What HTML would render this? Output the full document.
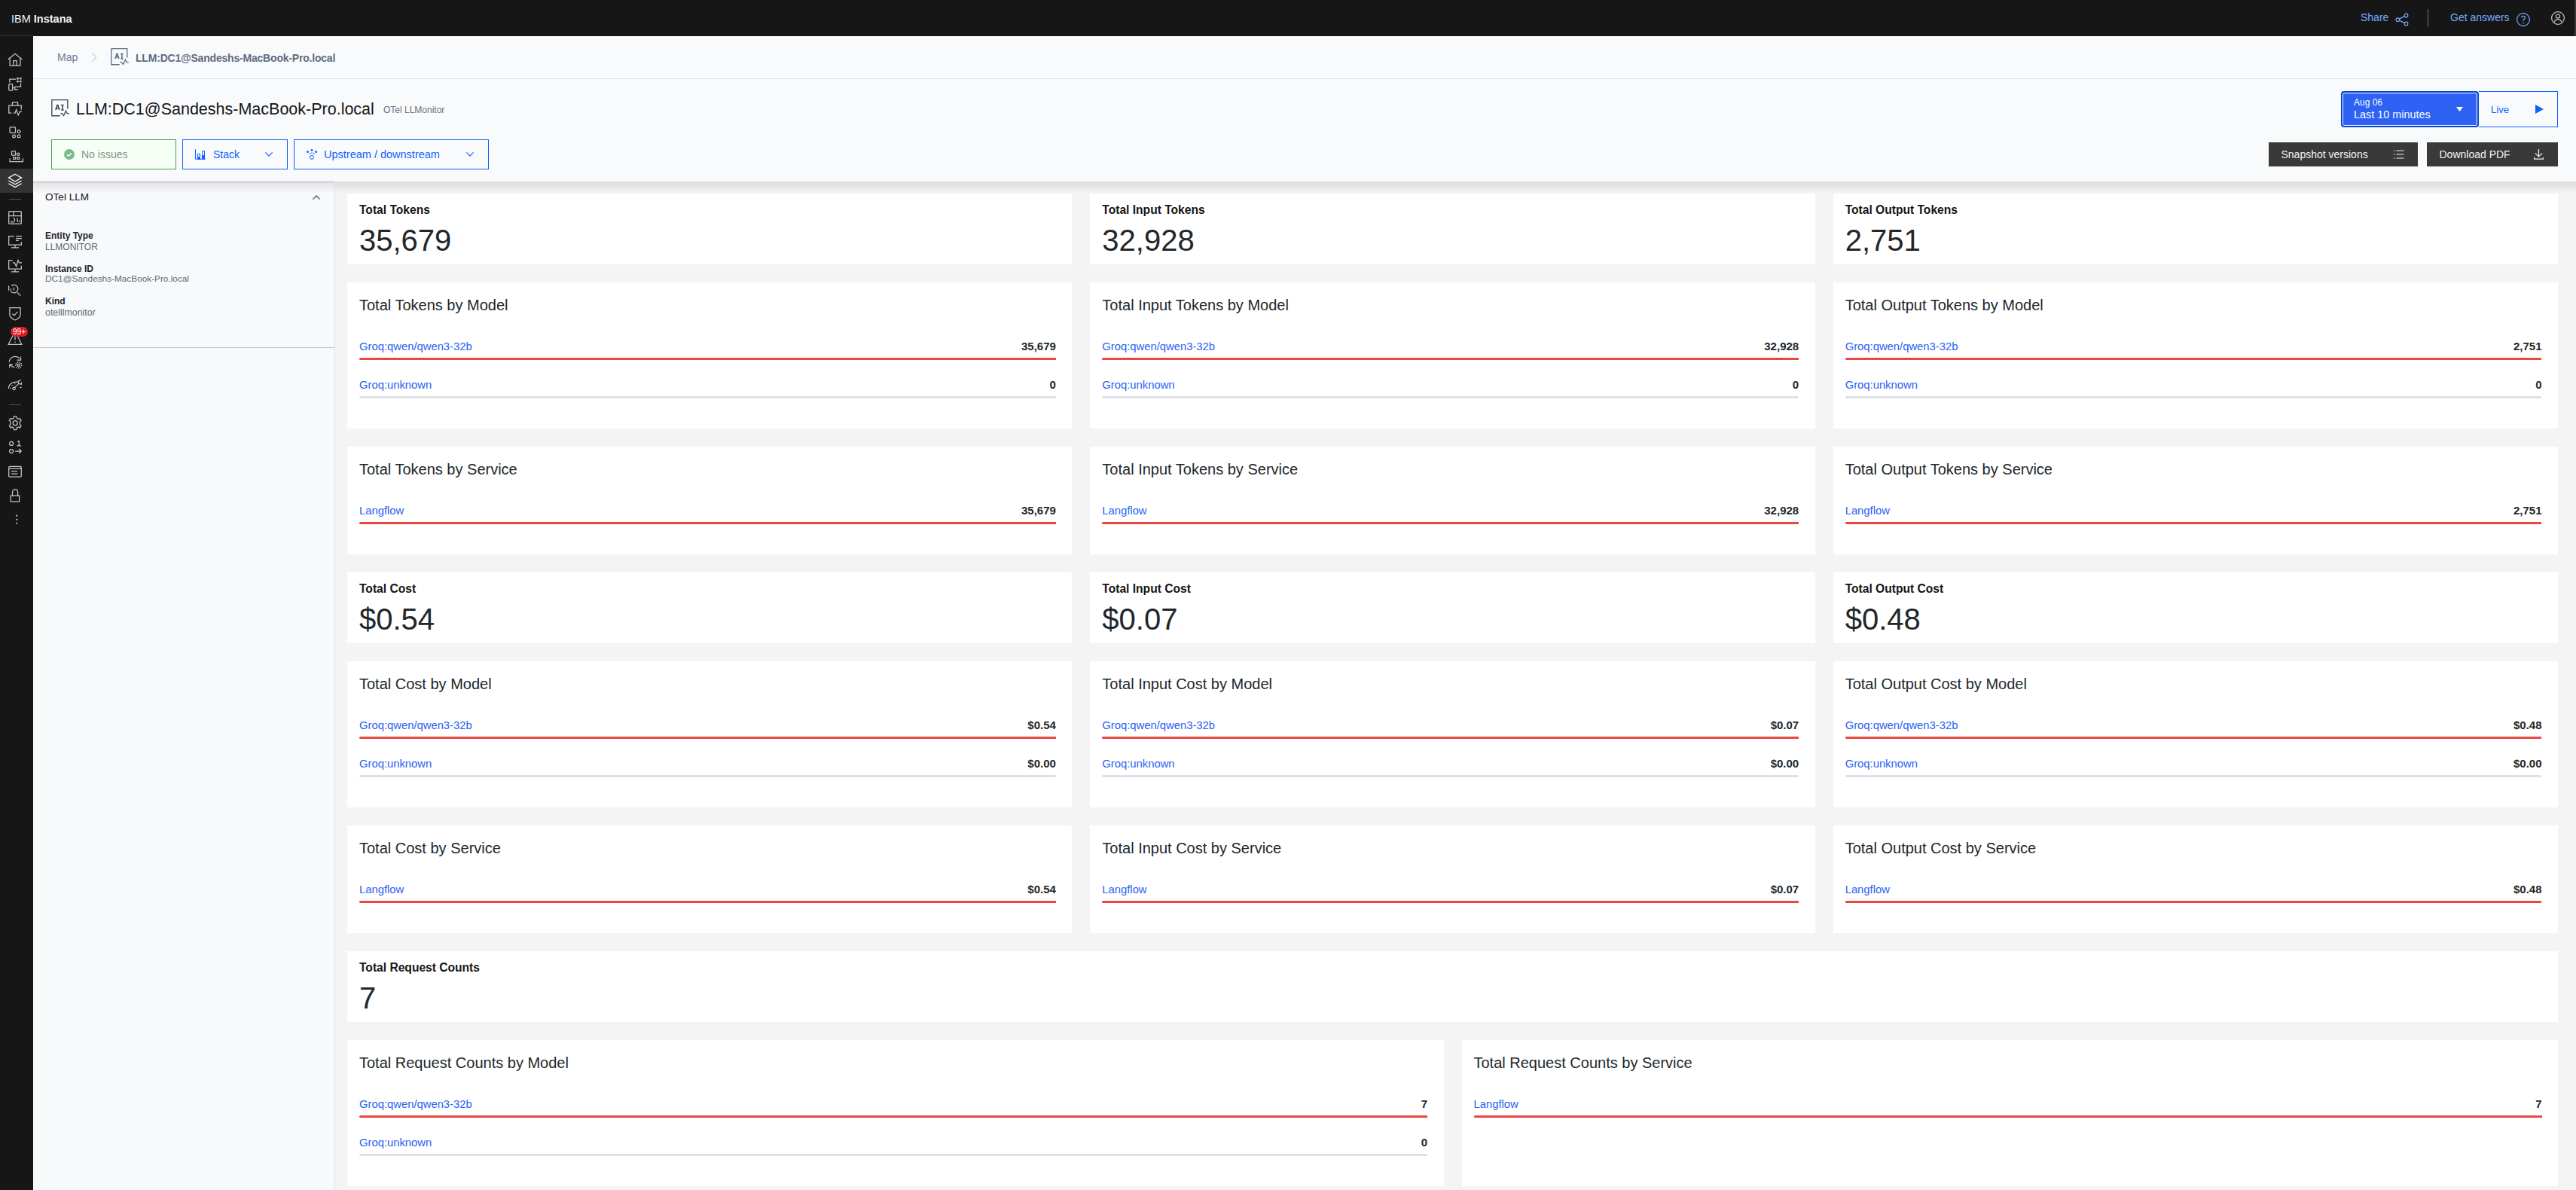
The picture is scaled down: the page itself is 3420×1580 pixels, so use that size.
<!DOCTYPE html>
<html><head><meta charset="utf-8"><title>IBM Instana</title>
<style>
*{box-sizing:border-box;margin:0;padding:0}
html,body{width:3420px;height:1580px;overflow:hidden;background:#f4f4f4;font-family:"Liberation Sans", sans-serif}
.t{position:absolute;white-space:nowrap}
.r{position:absolute}
.ic{position:absolute;fill:none;stroke:currentColor;stroke-width:1.25;stroke-linecap:butt;stroke-linejoin:miter;overflow:visible}
svg.s{position:absolute;overflow:visible;fill:none;stroke:currentColor}
</style></head><body>
<!-- top header -->
<div class="r" style="left:0px;top:0px;width:3420px;height:48px;background:#161616"></div>
<div class="t" style="left:15px;top:17.6px;font-size:14.5px;line-height:14.5px;color:#f4f4f4">IBM <b>Instana</b></div>
<div class="t" style="left:3134px;top:16.15px;font-size:14px;line-height:14px;color:#78a9ff;font-weight:400;">Share</div>
<svg class="s" style="left:3180px;top:17px;color:#78a9ff;stroke-width:1.2" width="18" height="18" viewBox="0 0 18 18"><circle cx="14.5" cy="3.5" r="2.3"/><circle cx="3.3" cy="9.2" r="2.3"/><circle cx="14.5" cy="14.5" r="2.3"/><path d="M5.4 8.1 L12.4 4.6 M5.4 10.3 L12.4 13.4"/></svg>
<div class="r" style="left:3223px;top:12px;width:1px;height:24px;background:#6f6f6f"></div>
<div class="t" style="left:3253px;top:16.15px;font-size:14px;line-height:14px;color:#78a9ff;font-weight:400;">Get answers</div>
<svg class="s" style="left:3341px;top:17px;color:#78a9ff;stroke-width:1.2" width="18" height="18" viewBox="0 0 18 18"><circle cx="9" cy="9" r="8.4"/><path d="M6.6 6.6 C6.6 5.2 7.6 4.4 9 4.4 C10.4 4.4 11.4 5.2 11.4 6.5 C11.4 8.2 9 8.4 9 10.2 V11"/><circle cx="9" cy="13.4" r="0.8" fill="currentColor" stroke="none"/></svg>
<svg class="s" style="left:3387px;top:15px;color:#c6c6c6;stroke-width:1.2" width="18" height="18" viewBox="0 0 18 18"><circle cx="9" cy="9" r="8.4"/><circle cx="9" cy="6.6" r="2.6"/><path d="M4.4 14.6 C4.4 12 6 10.8 9 10.8 C12 10.8 13.6 12 13.6 14.6"/></svg>
<div class="r" style="left:3418px;top:0px;width:2px;height:48px;background:#3a3a3a"></div>

<!-- sidebar -->
<div class="r" style="left:0px;top:48px;width:44px;height:1532px;background:#161616"></div>
<div class="r" style="left:0px;top:47px;width:44px;height:1px;background:#393939"></div>
<div class="r" style="left:0px;top:224px;width:44px;height:32px;background:#333333"></div>
<div class="r" style="left:12px;top:264px;width:16px;height:1px;background:#525252"></div>
<div class="r" style="left:12px;top:537px;width:16px;height:1px;background:#525252"></div>
<svg class="ic" style="left:10px;top:70px;color:#c6c6c6" width="20" height="20" viewBox="0 0 20 20"><path d="M0.8 8.8 L10 1.2 L19.2 8.8 M3.1 6.9 V17 H16.9 V6.9 M7.8 17 V10.6 H12.2 V17"/></svg>
<svg class="ic" style="left:10px;top:102px;color:#c6c6c6" width="20" height="20" viewBox="0 0 20 20"><path d="M2.8 7.4 V3.2 H11.2 M17.5 8.8 V13 H9.8 M9.8 13 V16.9 M8.6 16.9 H14 M7.2 14.6 H9.8"/><rect x="1.8" y="9.6" width="4.8" height="8.5" rx="0.8"/><rect x="12.2" y="1" width="2.5" height="2.5" fill="currentColor" stroke="none"/><rect x="16" y="1" width="2.5" height="2.5" fill="currentColor" stroke="none"/><rect x="12.2" y="4.9" width="2.5" height="2.5" fill="currentColor" stroke="none"/><rect x="16" y="4.9" width="2.5" height="2.5" fill="currentColor" stroke="none"/></svg>
<svg class="ic" style="left:10px;top:134px;color:#c6c6c6" width="20" height="20" viewBox="0 0 20 20"><path d="M6.4 5.4 V1.8 H13.6 V5.4 M5.4 16 H1.8 V6 H18.3 V11.6 M8 16 H10 L11.6 11.6 L14.2 18.9 L16.4 14.2 H18.9"/></svg>
<svg class="ic" style="left:10px;top:166px;color:#c6c6c6" width="20" height="20" viewBox="0 0 20 20"><rect x="3.1" y="2.9" width="7.4" height="7.4" rx="0.8"/><rect x="13.3" y="6.8" width="3.5" height="3.5" rx="1"/><rect x="6.8" y="13.1" width="3.5" height="3.5" rx="1"/><rect x="13.3" y="13.1" width="3.5" height="3.5" rx="1"/></svg>
<svg class="ic" style="left:10px;top:198px;color:#c6c6c6" width="20" height="20" viewBox="0 0 20 20"><rect x="5.5" y="2.7" width="5" height="5.5" rx="0.8"/><rect x="12.7" y="5.4" width="3" height="2.8" rx="0.6"/><rect x="7.6" y="10.5" width="3" height="2.8" rx="0.6"/><rect x="12.7" y="10.5" width="3" height="2.8" rx="0.6"/><path d="M3.1 12.3 V16.5 H20.4 V12.3"/><rect x="7.4" y="4.8" width="0.9" height="0.9" fill="currentColor" stroke="none"/></svg>
<svg class="ic" style="left:10px;top:230px;color:#ffffff" width="20" height="20" viewBox="0 0 20 20"><path d="M10 1.2 L18.6 6.1 L10 11 L1.4 6.1 Z M1.4 10 L10 14.8 L18.6 10 M1.4 13.8 L10 18.6 L18.6 13.8"/></svg>
<svg class="ic" style="left:10px;top:278px;color:#c6c6c6" width="20" height="20" viewBox="0 0 20 20"><rect x="1.7" y="2.7" width="16.6" height="16.5" rx="1"/><path d="M1.7 8.5 H18.3 M8.1 2.7 V8.5 M13.2 11.8 V17.1 M15.6 14.4 V17.1"/><path d="M7.6 11.2 A3 3 0 1 1 4 15.6"/></svg>
<svg class="ic" style="left:10px;top:310px;color:#c6c6c6" width="20" height="20" viewBox="0 0 20 20"><path d="M8.9 3.7 H1.7 V15.2 H18.3 V11 M10 15.2 V18.7 M4.9 18.9 H15.1 M11 3.7 H18.9 M11 6.6 H18.9 M11 9.3 H14.8"/></svg>
<svg class="ic" style="left:10px;top:342px;color:#c6c6c6" width="20" height="20" viewBox="0 0 20 20"><path d="M6.8 3.7 H1.7 V15.2 H18.3 V10.7 M10 15.2 V18.7 M4.9 18.9 H15.1 M6.8 6.9 H9.4 L11.6 11.8 L14 3.7 L15.6 6.9 H18.9"/></svg>
<svg class="ic" style="left:10px;top:374px;color:#c6c6c6" width="20" height="20" viewBox="0 0 20 20"><path d="M5.2 5.4 A5.3 5.3 0 1 1 4.2 12.6 M12.9 14.1 L17.4 18.6 M1.6 5.6 V11.8 M4.4 9.3 V11.8 M8.4 7.7 V11.5"/></svg>
<svg class="ic" style="left:10px;top:406px;color:#c6c6c6" width="20" height="20" viewBox="0 0 20 20"><path d="M2.9 2.7 H17.1 V11.8 C17.1 15 13.4 17.6 10 19 C6.6 17.6 2.9 15 2.9 11.8 Z M6.4 10.6 L8.8 12.8 L13.4 7.8"/></svg>
<svg class="ic" style="left:10px;top:438px;color:#c6c6c6" width="20" height="20" viewBox="0 0 20 20"><path d="M10 1.8 L18.8 19.3 H1.2 Z M10 8 V13.6"/><circle cx="10" cy="16.2" r="0.8" fill="currentColor" stroke="none"/></svg>
<svg class="ic" style="left:10px;top:470px;color:#c6c6c6" width="20" height="20" viewBox="0 0 20 20"><path d="M2.2 10.7 C2.6 4.2 10.4 1 15.6 5.4 M17.5 3.4 V8 H12.7 M9.2 18.5 L2.7 13.9 M2.7 13.9 V18 M2.7 13.9 H6.8"/><circle cx="14.8" cy="14.7" r="1.6"/><circle cx="14.8" cy="14.7" r="3.9" stroke-width="1.6" stroke-dasharray="1.3 1.35"/></svg>
<svg class="ic" style="left:10px;top:502px;color:#c6c6c6" width="20" height="20" viewBox="0 0 20 20"><path d="M1.4 14 C1.4 8 7 4.2 13.4 5.2 M9.6 12.4 L14.8 7.4 L14 4.4 L17.6 2.6 M14.8 7.4 L18.4 8.2 V5.6 M3 13.4 H4.4 M5.6 9.2 L6.4 10 M9.7 7 V8.2 M16.2 12.4 H18.6"/><circle cx="8.6" cy="13.8" r="1.7"/></svg>
<svg class="ic" style="left:10px;top:551px;color:#c6c6c6" width="20" height="20" viewBox="0 0 20 20"><circle cx="10.2" cy="10.7" r="3"/><path d="M8.6 1.9 H11.8 L12.3 4.2 L14.3 5.4 L16.5 4.5 L18.1 7.3 L16.4 8.9 V12.5 L18.1 14.1 L16.5 16.9 L14.3 16 L12.3 17.2 L11.8 19.5 H8.6 L8.1 17.2 L6.1 16 L3.9 16.9 L2.3 14.1 L4 12.5 V8.9 L2.3 7.3 L3.9 4.5 L6.1 5.4 L8.1 4.2 Z"/></svg>
<svg class="ic" style="left:10px;top:583px;color:#c6c6c6" width="20" height="20" viewBox="0 0 20 20"><circle cx="5.1" cy="5.9" r="2.5"/><circle cx="5.1" cy="16" r="2.5"/><path d="M13.2 3.6 L15.2 2.6 V8.9 M12.4 8.9 H18 M10.2 16 H18.2 M15.2 13 L18.2 16 L15.2 19"/></svg>
<svg class="ic" style="left:10px;top:615px;color:#c6c6c6" width="20" height="20" viewBox="0 0 20 20"><rect x="1.7" y="4.4" width="16.6" height="13.7" rx="1"/><path d="M1.7 7.2 H18.3 M5.1 10.6 H13.2 M5.1 14.2 H13.2"/></svg>
<svg class="ic" style="left:10px;top:647px;color:#c6c6c6" width="20" height="20" viewBox="0 0 20 20"><rect x="4.3" y="11.1" width="11.3" height="7.9"/><path d="M6.5 11.1 V6.4 C6.5 1.6 13.6 1.6 13.6 6.4 V11.1"/></svg>
<svg class="ic" style="left:10px;top:679px;color:#c6c6c6" width="20" height="20" viewBox="0 0 20 20"><circle cx="12.2" cy="5.7" r="1.1" fill="currentColor" stroke="none"/><circle cx="12.2" cy="10.8" r="1.1" fill="currentColor" stroke="none"/><circle cx="12.2" cy="15.8" r="1.1" fill="currentColor" stroke="none"/></svg>
<div class="r" style="left:14px;top:434px;width:23px;height:13px;border-radius:6.5px;background:#da1e28"></div>
<div class="t" style="left:14px;top:434px;width:23px;height:13px;font-size:10px;line-height:13px;color:#fff;text-align:center">99+</div>

<!-- page header -->
<div class="r" style="left:44px;top:48px;width:3376px;height:193px;background:#f9fafc"></div>
<div class="r" style="left:44px;top:240px;width:3376px;height:1px;background:#fdfdfe"></div>
<div class="r" style="left:44px;top:104px;width:3376px;height:1px;background:#dde1e6"></div>
<div class="t" style="left:76px;top:69.15px;font-size:14px;line-height:14px;color:#6a7b91;font-weight:400;">Map</div>
<svg class="s" style="left:121px;top:70px;color:#a8b3bf;stroke-width:1" width="8" height="12" viewBox="0 0 8 12"><path d="M1 0.5 L6.8 6 L1 11.5"/></svg>
<svg class="s" style="left:146px;top:63px;color:#5a6d82;stroke-width:1.3" width="24" height="24" viewBox="0 0 24 24"><path d="M12.7 22.75 H1.85 V1.65 H22.8 V13.6"/><path d="M13.4 19.6 H15.3 L17.6 22.6 L20.4 16.2 L22.1 19.6 H24.8"/><path stroke-width="1.6" d="M6.9 15 L9 8.6 H9.8 L11.9 15 M7.6 12.8 H11.2 M15.9 8.6 V14.9"/><path stroke-width="1.4" d="M14.2 8.5 H17.6 M14.2 15 H17.6"/></svg>
<div class="t" style="left:180px;top:70.15px;font-size:14px;line-height:14px;color:#5d6c80;font-weight:700;letter-spacing:-0.2px">LLM:DC1@Sandeshs-MacBook-Pro.local</div>

<svg class="s" style="left:67px;top:131px;color:#3d4550;stroke-width:1.3" width="24" height="24" viewBox="0 0 24 24"><path d="M12.7 22.75 H1.85 V1.65 H22.8 V13.6"/><path d="M13.4 19.6 H15.3 L17.6 22.6 L20.4 16.2 L22.1 19.6 H24.8"/><path stroke-width="1.6" d="M6.9 15 L9 8.6 H9.8 L11.9 15 M7.6 12.8 H11.2 M15.9 8.6 V14.9"/><path stroke-width="1.4" d="M14.2 8.5 H17.6 M14.2 15 H17.6"/></svg>
<div class="t" style="left:101px;top:134.50px;font-size:21.5px;line-height:21.5px;color:#161616;font-weight:400;">LLM:DC1@Sandeshs-MacBook-Pro.local</div>
<div class="t" style="left:509px;top:139.84px;font-size:12px;line-height:12px;color:#697077;font-weight:400;">OTel LLMonitor</div>

<!-- buttons -->
<div class="r" style="left:68px;top:185px;width:166px;height:40px;border:1px solid #4a9e4f;background:#f6fff6"></div>
<svg class="s" style="left:85px;top:198px" width="14" height="14" viewBox="0 0 14 14"><circle cx="7" cy="7" r="7" fill="#7fb98a" stroke="none"/><path d="M4 7.2 L6.1 9.2 L10 5.2" stroke="#fff" stroke-width="1.4"/></svg>
<div class="t" style="left:108px;top:198.15px;font-size:14px;line-height:14px;color:#8d8d8d;font-weight:400;">No issues</div>

<div class="r" style="left:242px;top:185px;width:140px;height:40px;border:1px solid #0f62fe"></div>
<svg class="s" style="left:254px;top:192px;color:#0f62fe;stroke-width:1.1" width="26" height="26" viewBox="0 0 26 26"><path d="M5.5 6.3 V18.5 Q5.5 19.3 6.3 19.3 H18.6"/><rect x="8.6" y="12.6" width="2.9" height="6.7" stroke-width="1"/><rect x="8.1" y="16" width="3.9" height="3.3" fill="currentColor" stroke="none"/><rect x="14.6" y="8.6" width="2.9" height="10.7" stroke-width="1"/><rect x="14.1" y="14" width="3.9" height="5.3" fill="currentColor" stroke="none"/></svg>
<div class="t" style="left:283px;top:198.15px;font-size:14px;line-height:14px;color:#0f62fe;font-weight:400;">Stack</div>
<svg class="s" style="left:352px;top:202px;color:#0f62fe;stroke-width:1.1" width="10" height="6" viewBox="0 0 10 6"><path d="M0.4 0.4 L5 5.2 L9.6 0.4"/></svg>

<div class="r" style="left:390px;top:185px;width:259px;height:40px;border:1px solid #0f62fe"></div>
<svg class="s" style="left:407px;top:198px;color:#0f62fe;stroke-width:1.1" width="14" height="14" viewBox="0 0 14 14"><circle cx="1.5" cy="3.4" r="1.5" fill="currentColor" stroke="none"/><circle cx="7" cy="1.4" r="1.4" fill="currentColor" stroke="none"/><circle cx="12.5" cy="3.4" r="1.5" fill="currentColor" stroke="none"/><circle cx="7" cy="5" r="0.8" fill="currentColor" stroke="none"/><path d="M3.4 6.4 Q4.6 6.4 4.8 5.2 M10.6 6.4 Q9.4 6.4 9.2 5.2" stroke-width="1.2"/><circle cx="7" cy="10.9" r="2.5" stroke-width="1"/></svg>
<div class="t" style="left:430px;top:197.73px;font-size:14.5px;line-height:14.5px;color:#0f62fe;font-weight:400;">Upstream / downstream</div>
<svg class="s" style="left:619px;top:202px;color:#0f62fe;stroke-width:1.1" width="10" height="6" viewBox="0 0 10 6"><path d="M0.4 0.4 L5 5.2 L9.6 0.4"/></svg>

<!-- right controls -->
<div class="r" style="left:3108px;top:121px;width:183px;height:48px;border:2px solid #0043ce;border-radius:4px;box-shadow:inset 0 0 0 1px #fff;background:#2e62f4"></div>
<div class="t" style="left:3125px;top:129.84px;font-size:12px;line-height:12px;color:#ffffff;font-weight:400;">Aug 06</div>
<div class="t" style="left:3125px;top:145.11px;font-size:14.4px;line-height:14.4px;color:#ffffff;font-weight:400;">Last 10 minutes</div>
<svg class="s" style="left:3261px;top:142px" width="9" height="6" viewBox="0 0 9 6"><path d="M0 0 H9 L4.5 6 Z" fill="#fff" stroke="none"/></svg>
<div class="r" style="left:3291px;top:121px;width:105px;height:48px;border:1px solid #0f62fe;border-left:none"></div>
<div class="t" style="left:3307px;top:138.83px;font-size:13.2px;line-height:13.2px;color:#0f62fe;font-weight:400;">Live</div>
<svg class="s" style="left:3366px;top:139px" width="11" height="12" viewBox="0 0 11 12"><path d="M0 0 L11 6 L0 12 Z" fill="#0f62fe" stroke="none"/></svg>

<div class="r" style="left:3012px;top:189px;width:198px;height:32px;background:#393939"></div>
<div class="t" style="left:3028.5px;top:198.15px;font-size:14px;line-height:14px;color:#f4f4f4;font-weight:400;">Snapshot versions</div>
<svg class="s" style="left:3178px;top:199px;color:#f4f4f4;stroke-width:1.1" width="14" height="12" viewBox="0 0 14 12"><path d="M3.5 1 H13.5 M3.5 6 H13.5 M3.5 11 H13.5"/><circle cx="0.8" cy="1" r="0.7" fill="currentColor" stroke="none"/><circle cx="0.8" cy="6" r="0.7" fill="currentColor" stroke="none"/><circle cx="0.8" cy="11" r="0.7" fill="currentColor" stroke="none"/></svg>
<div class="r" style="left:3222px;top:189px;width:174px;height:32px;background:#393939"></div>
<div class="t" style="left:3238.5px;top:198.15px;font-size:14px;line-height:14px;color:#f4f4f4;font-weight:400;">Download PDF</div>
<svg class="s" style="left:3364px;top:198px;color:#f4f4f4;stroke-width:1.2" width="13" height="14" viewBox="0 0 13 14"><path d="M6.5 0 V10 M1.8 5.4 L6.5 10 L11.2 5.4 M0.6 11 V13.2 H12.4 V11"/></svg>

<!-- header shadow -->
<div class="r" style="left:44px;top:241px;width:3376px;height:16px;background:linear-gradient(rgba(0,0,0,0.1),rgba(0,0,0,0))"></div>

<!-- left panel -->
<div class="r" style="left:44px;top:241px;width:400px;height:1339px;background:#f8f9fb"></div>
<div class="r" style="left:444px;top:241px;width:1px;height:1339px;background:#dde1e6"></div>
<div class="r" style="left:44px;top:461px;width:400px;height:1px;background:#c6c6c6"></div>
<div class="r" style="left:44px;top:241px;width:400px;height:1px;background:#c4c4c4"></div>
<div class="r" style="left:44px;top:241px;width:400px;height:16px;background:linear-gradient(rgba(0,0,0,0.1),rgba(0,0,0,0))"></div>
<div class="t" style="left:60px;top:255.49px;font-size:13.6px;line-height:13.6px;color:#161616;font-weight:400;">OTel LLM</div>
<svg class="s" style="left:415px;top:259px;color:#393939;stroke-width:1.1" width="10" height="6" viewBox="0 0 10 6"><path d="M0.4 5.6 L5 0.8 L9.6 5.6"/></svg>
<div class="t" style="left:60px;top:306.84px;font-size:12px;line-height:12px;color:#21272a;font-weight:700;">Entity Type</div>
<div class="t" style="left:60px;top:321.84px;font-size:12px;line-height:12px;color:#5a6872;font-weight:400;">LLMONITOR</div>
<div class="t" style="left:60px;top:350.84px;font-size:12px;line-height:12px;color:#21272a;font-weight:700;">Instance ID</div>
<div class="t" style="left:60px;top:365.01px;font-size:11.8px;line-height:11.8px;color:#5a6872;font-weight:400;">DC1@Sandeshs-MacBook-Pro.local</div>
<div class="t" style="left:60px;top:393.84px;font-size:12px;line-height:12px;color:#21272a;font-weight:700;">Kind</div>
<div class="t" style="left:60px;top:408.50px;font-size:12.4px;line-height:12.4px;color:#5a6872;font-weight:400;">otelllmonitor</div>

<!-- cards -->
<div class="r" style="left:461px;top:257px;width:962.3333333333334px;height:94px;background:#fff"></div>
<div class="t" style="left:477px;top:270.79px;font-size:15.6px;line-height:15.6px;color:#161616;font-weight:700;">Total Tokens</div>
<div class="t" style="left:477px;top:299.14px;font-size:40px;line-height:40px;color:#21272a;font-weight:400;">35,679</div>
<div class="r" style="left:1447.3333333333335px;top:257px;width:962.3333333333334px;height:94px;background:#fff"></div>
<div class="t" style="left:1463.3333333333335px;top:270.79px;font-size:15.6px;line-height:15.6px;color:#161616;font-weight:700;">Total Input Tokens</div>
<div class="t" style="left:1463.3333333333335px;top:299.14px;font-size:40px;line-height:40px;color:#21272a;font-weight:400;">32,928</div>
<div class="r" style="left:2433.666666666667px;top:257px;width:962.3333333333334px;height:94px;background:#fff"></div>
<div class="t" style="left:2449.666666666667px;top:270.79px;font-size:15.6px;line-height:15.6px;color:#161616;font-weight:700;">Total Output Tokens</div>
<div class="t" style="left:2449.666666666667px;top:299.14px;font-size:40px;line-height:40px;color:#21272a;font-weight:400;">2,751</div>
<div class="r" style="left:461px;top:375px;width:962.3333333333334px;height:194px;background:#fff"></div>
<div class="t" style="left:477px;top:395.07px;font-size:20px;line-height:20px;color:#21272a;font-weight:400;">Total Tokens by Model</div>
<div class="t" style="left:477px;top:453.47px;font-size:14.8px;line-height:14.8px;color:#2962f2;font-weight:400;">Groq:qwen/qwen3-32b</div>
<div class="t" style="right:2018.1666666666665px;top:452.30px;font-size:15px;line-height:15px;color:#21272a;font-weight:700;">35,679</div>
<div class="r" style="left:477px;top:475px;width:924.8333333333335px;height:3px;background:#dde1e6;border-radius:1.5px"></div>
<div class="r" style="left:477px;top:475px;width:924.8333333333335px;height:3px;background:#e9473f;border-radius:1.5px 0 0 1.5px"></div>
<div class="t" style="left:477px;top:504.47px;font-size:14.8px;line-height:14.8px;color:#2962f2;font-weight:400;">Groq:unknown</div>
<div class="t" style="right:2018.1666666666665px;top:503.30px;font-size:15px;line-height:15px;color:#21272a;font-weight:700;">0</div>
<div class="r" style="left:477px;top:526px;width:924.8333333333335px;height:3px;background:#dde1e6;border-radius:1.5px"></div>
<div class="r" style="left:1447.3333333333335px;top:375px;width:962.3333333333334px;height:194px;background:#fff"></div>
<div class="t" style="left:1463.3333333333335px;top:395.07px;font-size:20px;line-height:20px;color:#21272a;font-weight:400;">Total Input Tokens by Model</div>
<div class="t" style="left:1463.3333333333335px;top:453.47px;font-size:14.8px;line-height:14.8px;color:#2962f2;font-weight:400;">Groq:qwen/qwen3-32b</div>
<div class="t" style="right:1031.833333333333px;top:452.30px;font-size:15px;line-height:15px;color:#21272a;font-weight:700;">32,928</div>
<div class="r" style="left:1463.3333333333335px;top:475px;width:924.8333333333335px;height:3px;background:#dde1e6;border-radius:1.5px"></div>
<div class="r" style="left:1463.3333333333335px;top:475px;width:924.8333333333335px;height:3px;background:#e9473f;border-radius:1.5px 0 0 1.5px"></div>
<div class="t" style="left:1463.3333333333335px;top:504.47px;font-size:14.8px;line-height:14.8px;color:#2962f2;font-weight:400;">Groq:unknown</div>
<div class="t" style="right:1031.833333333333px;top:503.30px;font-size:15px;line-height:15px;color:#21272a;font-weight:700;">0</div>
<div class="r" style="left:1463.3333333333335px;top:526px;width:924.8333333333335px;height:3px;background:#dde1e6;border-radius:1.5px"></div>
<div class="r" style="left:2433.666666666667px;top:375px;width:962.3333333333334px;height:194px;background:#fff"></div>
<div class="t" style="left:2449.666666666667px;top:395.07px;font-size:20px;line-height:20px;color:#21272a;font-weight:400;">Total Output Tokens by Model</div>
<div class="t" style="left:2449.666666666667px;top:453.47px;font-size:14.8px;line-height:14.8px;color:#2962f2;font-weight:400;">Groq:qwen/qwen3-32b</div>
<div class="t" style="right:45.499999999999545px;top:452.30px;font-size:15px;line-height:15px;color:#21272a;font-weight:700;">2,751</div>
<div class="r" style="left:2449.666666666667px;top:475px;width:924.8333333333335px;height:3px;background:#dde1e6;border-radius:1.5px"></div>
<div class="r" style="left:2449.666666666667px;top:475px;width:924.8333333333335px;height:3px;background:#e9473f;border-radius:1.5px 0 0 1.5px"></div>
<div class="t" style="left:2449.666666666667px;top:504.47px;font-size:14.8px;line-height:14.8px;color:#2962f2;font-weight:400;">Groq:unknown</div>
<div class="t" style="right:45.499999999999545px;top:503.30px;font-size:15px;line-height:15px;color:#21272a;font-weight:700;">0</div>
<div class="r" style="left:2449.666666666667px;top:526px;width:924.8333333333335px;height:3px;background:#dde1e6;border-radius:1.5px"></div>
<div class="r" style="left:461px;top:593px;width:962.3333333333334px;height:143px;background:#fff"></div>
<div class="t" style="left:477px;top:613.07px;font-size:20px;line-height:20px;color:#21272a;font-weight:400;">Total Tokens by Service</div>
<div class="t" style="left:477px;top:671.47px;font-size:14.8px;line-height:14.8px;color:#2962f2;font-weight:400;">Langflow</div>
<div class="t" style="right:2018.1666666666665px;top:670.30px;font-size:15px;line-height:15px;color:#21272a;font-weight:700;">35,679</div>
<div class="r" style="left:477px;top:693px;width:924.8333333333335px;height:3px;background:#dde1e6;border-radius:1.5px"></div>
<div class="r" style="left:477px;top:693px;width:924.8333333333335px;height:3px;background:#e9473f;border-radius:1.5px 0 0 1.5px"></div>
<div class="r" style="left:1447.3333333333335px;top:593px;width:962.3333333333334px;height:143px;background:#fff"></div>
<div class="t" style="left:1463.3333333333335px;top:613.07px;font-size:20px;line-height:20px;color:#21272a;font-weight:400;">Total Input Tokens by Service</div>
<div class="t" style="left:1463.3333333333335px;top:671.47px;font-size:14.8px;line-height:14.8px;color:#2962f2;font-weight:400;">Langflow</div>
<div class="t" style="right:1031.833333333333px;top:670.30px;font-size:15px;line-height:15px;color:#21272a;font-weight:700;">32,928</div>
<div class="r" style="left:1463.3333333333335px;top:693px;width:924.8333333333335px;height:3px;background:#dde1e6;border-radius:1.5px"></div>
<div class="r" style="left:1463.3333333333335px;top:693px;width:924.8333333333335px;height:3px;background:#e9473f;border-radius:1.5px 0 0 1.5px"></div>
<div class="r" style="left:2433.666666666667px;top:593px;width:962.3333333333334px;height:143px;background:#fff"></div>
<div class="t" style="left:2449.666666666667px;top:613.07px;font-size:20px;line-height:20px;color:#21272a;font-weight:400;">Total Output Tokens by Service</div>
<div class="t" style="left:2449.666666666667px;top:671.47px;font-size:14.8px;line-height:14.8px;color:#2962f2;font-weight:400;">Langflow</div>
<div class="t" style="right:45.499999999999545px;top:670.30px;font-size:15px;line-height:15px;color:#21272a;font-weight:700;">2,751</div>
<div class="r" style="left:2449.666666666667px;top:693px;width:924.8333333333335px;height:3px;background:#dde1e6;border-radius:1.5px"></div>
<div class="r" style="left:2449.666666666667px;top:693px;width:924.8333333333335px;height:3px;background:#e9473f;border-radius:1.5px 0 0 1.5px"></div>
<div class="r" style="left:461px;top:760px;width:962.3333333333334px;height:94px;background:#fff"></div>
<div class="t" style="left:477px;top:773.79px;font-size:15.6px;line-height:15.6px;color:#161616;font-weight:700;">Total Cost</div>
<div class="t" style="left:477px;top:802.14px;font-size:40px;line-height:40px;color:#21272a;font-weight:400;">$0.54</div>
<div class="r" style="left:1447.3333333333335px;top:760px;width:962.3333333333334px;height:94px;background:#fff"></div>
<div class="t" style="left:1463.3333333333335px;top:773.79px;font-size:15.6px;line-height:15.6px;color:#161616;font-weight:700;">Total Input Cost</div>
<div class="t" style="left:1463.3333333333335px;top:802.14px;font-size:40px;line-height:40px;color:#21272a;font-weight:400;">$0.07</div>
<div class="r" style="left:2433.666666666667px;top:760px;width:962.3333333333334px;height:94px;background:#fff"></div>
<div class="t" style="left:2449.666666666667px;top:773.79px;font-size:15.6px;line-height:15.6px;color:#161616;font-weight:700;">Total Output Cost</div>
<div class="t" style="left:2449.666666666667px;top:802.14px;font-size:40px;line-height:40px;color:#21272a;font-weight:400;">$0.48</div>
<div class="r" style="left:461px;top:878px;width:962.3333333333334px;height:194px;background:#fff"></div>
<div class="t" style="left:477px;top:898.07px;font-size:20px;line-height:20px;color:#21272a;font-weight:400;">Total Cost by Model</div>
<div class="t" style="left:477px;top:956.47px;font-size:14.8px;line-height:14.8px;color:#2962f2;font-weight:400;">Groq:qwen/qwen3-32b</div>
<div class="t" style="right:2018.1666666666665px;top:955.30px;font-size:15px;line-height:15px;color:#21272a;font-weight:700;">$0.54</div>
<div class="r" style="left:477px;top:978px;width:924.8333333333335px;height:3px;background:#dde1e6;border-radius:1.5px"></div>
<div class="r" style="left:477px;top:978px;width:924.8333333333335px;height:3px;background:#e9473f;border-radius:1.5px 0 0 1.5px"></div>
<div class="t" style="left:477px;top:1007.47px;font-size:14.8px;line-height:14.8px;color:#2962f2;font-weight:400;">Groq:unknown</div>
<div class="t" style="right:2018.1666666666665px;top:1006.30px;font-size:15px;line-height:15px;color:#21272a;font-weight:700;">$0.00</div>
<div class="r" style="left:477px;top:1029px;width:924.8333333333335px;height:3px;background:#dde1e6;border-radius:1.5px"></div>
<div class="r" style="left:1447.3333333333335px;top:878px;width:962.3333333333334px;height:194px;background:#fff"></div>
<div class="t" style="left:1463.3333333333335px;top:898.07px;font-size:20px;line-height:20px;color:#21272a;font-weight:400;">Total Input Cost by Model</div>
<div class="t" style="left:1463.3333333333335px;top:956.47px;font-size:14.8px;line-height:14.8px;color:#2962f2;font-weight:400;">Groq:qwen/qwen3-32b</div>
<div class="t" style="right:1031.833333333333px;top:955.30px;font-size:15px;line-height:15px;color:#21272a;font-weight:700;">$0.07</div>
<div class="r" style="left:1463.3333333333335px;top:978px;width:924.8333333333335px;height:3px;background:#dde1e6;border-radius:1.5px"></div>
<div class="r" style="left:1463.3333333333335px;top:978px;width:924.8333333333335px;height:3px;background:#e9473f;border-radius:1.5px 0 0 1.5px"></div>
<div class="t" style="left:1463.3333333333335px;top:1007.47px;font-size:14.8px;line-height:14.8px;color:#2962f2;font-weight:400;">Groq:unknown</div>
<div class="t" style="right:1031.833333333333px;top:1006.30px;font-size:15px;line-height:15px;color:#21272a;font-weight:700;">$0.00</div>
<div class="r" style="left:1463.3333333333335px;top:1029px;width:924.8333333333335px;height:3px;background:#dde1e6;border-radius:1.5px"></div>
<div class="r" style="left:2433.666666666667px;top:878px;width:962.3333333333334px;height:194px;background:#fff"></div>
<div class="t" style="left:2449.666666666667px;top:898.07px;font-size:20px;line-height:20px;color:#21272a;font-weight:400;">Total Output Cost by Model</div>
<div class="t" style="left:2449.666666666667px;top:956.47px;font-size:14.8px;line-height:14.8px;color:#2962f2;font-weight:400;">Groq:qwen/qwen3-32b</div>
<div class="t" style="right:45.499999999999545px;top:955.30px;font-size:15px;line-height:15px;color:#21272a;font-weight:700;">$0.48</div>
<div class="r" style="left:2449.666666666667px;top:978px;width:924.8333333333335px;height:3px;background:#dde1e6;border-radius:1.5px"></div>
<div class="r" style="left:2449.666666666667px;top:978px;width:924.8333333333335px;height:3px;background:#e9473f;border-radius:1.5px 0 0 1.5px"></div>
<div class="t" style="left:2449.666666666667px;top:1007.47px;font-size:14.8px;line-height:14.8px;color:#2962f2;font-weight:400;">Groq:unknown</div>
<div class="t" style="right:45.499999999999545px;top:1006.30px;font-size:15px;line-height:15px;color:#21272a;font-weight:700;">$0.00</div>
<div class="r" style="left:2449.666666666667px;top:1029px;width:924.8333333333335px;height:3px;background:#dde1e6;border-radius:1.5px"></div>
<div class="r" style="left:461px;top:1096px;width:962.3333333333334px;height:143px;background:#fff"></div>
<div class="t" style="left:477px;top:1116.07px;font-size:20px;line-height:20px;color:#21272a;font-weight:400;">Total Cost by Service</div>
<div class="t" style="left:477px;top:1174.47px;font-size:14.8px;line-height:14.8px;color:#2962f2;font-weight:400;">Langflow</div>
<div class="t" style="right:2018.1666666666665px;top:1173.30px;font-size:15px;line-height:15px;color:#21272a;font-weight:700;">$0.54</div>
<div class="r" style="left:477px;top:1196px;width:924.8333333333335px;height:3px;background:#dde1e6;border-radius:1.5px"></div>
<div class="r" style="left:477px;top:1196px;width:924.8333333333335px;height:3px;background:#e9473f;border-radius:1.5px 0 0 1.5px"></div>
<div class="r" style="left:1447.3333333333335px;top:1096px;width:962.3333333333334px;height:143px;background:#fff"></div>
<div class="t" style="left:1463.3333333333335px;top:1116.07px;font-size:20px;line-height:20px;color:#21272a;font-weight:400;">Total Input Cost by Service</div>
<div class="t" style="left:1463.3333333333335px;top:1174.47px;font-size:14.8px;line-height:14.8px;color:#2962f2;font-weight:400;">Langflow</div>
<div class="t" style="right:1031.833333333333px;top:1173.30px;font-size:15px;line-height:15px;color:#21272a;font-weight:700;">$0.07</div>
<div class="r" style="left:1463.3333333333335px;top:1196px;width:924.8333333333335px;height:3px;background:#dde1e6;border-radius:1.5px"></div>
<div class="r" style="left:1463.3333333333335px;top:1196px;width:924.8333333333335px;height:3px;background:#e9473f;border-radius:1.5px 0 0 1.5px"></div>
<div class="r" style="left:2433.666666666667px;top:1096px;width:962.3333333333334px;height:143px;background:#fff"></div>
<div class="t" style="left:2449.666666666667px;top:1116.07px;font-size:20px;line-height:20px;color:#21272a;font-weight:400;">Total Output Cost by Service</div>
<div class="t" style="left:2449.666666666667px;top:1174.47px;font-size:14.8px;line-height:14.8px;color:#2962f2;font-weight:400;">Langflow</div>
<div class="t" style="right:45.499999999999545px;top:1173.30px;font-size:15px;line-height:15px;color:#21272a;font-weight:700;">$0.48</div>
<div class="r" style="left:2449.666666666667px;top:1196px;width:924.8333333333335px;height:3px;background:#dde1e6;border-radius:1.5px"></div>
<div class="r" style="left:2449.666666666667px;top:1196px;width:924.8333333333335px;height:3px;background:#e9473f;border-radius:1.5px 0 0 1.5px"></div>
<div class="r" style="left:461px;top:1263px;width:2935px;height:94px;background:#fff"></div>
<div class="t" style="left:477px;top:1276.79px;font-size:15.6px;line-height:15.6px;color:#161616;font-weight:700;">Total Request Counts</div>
<div class="t" style="left:477px;top:1305.14px;font-size:40px;line-height:40px;color:#21272a;font-weight:400;">7</div>
<div class="r" style="left:461px;top:1381px;width:1455.5px;height:194px;background:#fff"></div>
<div class="t" style="left:477px;top:1401.07px;font-size:20px;line-height:20px;color:#21272a;font-weight:400;">Total Request Counts by Model</div>
<div class="t" style="left:477px;top:1459.47px;font-size:14.8px;line-height:14.8px;color:#2962f2;font-weight:400;">Groq:qwen/qwen3-32b</div>
<div class="t" style="right:1525.0px;top:1458.30px;font-size:15px;line-height:15px;color:#21272a;font-weight:700;">7</div>
<div class="r" style="left:477px;top:1481px;width:1418.0px;height:3px;background:#dde1e6;border-radius:1.5px"></div>
<div class="r" style="left:477px;top:1481px;width:1418.0px;height:3px;background:#e9473f;border-radius:1.5px 0 0 1.5px"></div>
<div class="t" style="left:477px;top:1510.47px;font-size:14.8px;line-height:14.8px;color:#2962f2;font-weight:400;">Groq:unknown</div>
<div class="t" style="right:1525.0px;top:1509.30px;font-size:15px;line-height:15px;color:#21272a;font-weight:700;">0</div>
<div class="r" style="left:477px;top:1532px;width:1418.0px;height:3px;background:#dde1e6;border-radius:1.5px"></div>
<div class="r" style="left:1940.5px;top:1381px;width:1455.5px;height:194px;background:#fff"></div>
<div class="t" style="left:1956.5px;top:1401.07px;font-size:20px;line-height:20px;color:#21272a;font-weight:400;">Total Request Counts by Service</div>
<div class="t" style="left:1956.5px;top:1459.47px;font-size:14.8px;line-height:14.8px;color:#2962f2;font-weight:400;">Langflow</div>
<div class="t" style="right:45.5px;top:1458.30px;font-size:15px;line-height:15px;color:#21272a;font-weight:700;">7</div>
<div class="r" style="left:1956.5px;top:1481px;width:1418.0px;height:3px;background:#dde1e6;border-radius:1.5px"></div>
<div class="r" style="left:1956.5px;top:1481px;width:1418.0px;height:3px;background:#e9473f;border-radius:1.5px 0 0 1.5px"></div>
</body></html>
